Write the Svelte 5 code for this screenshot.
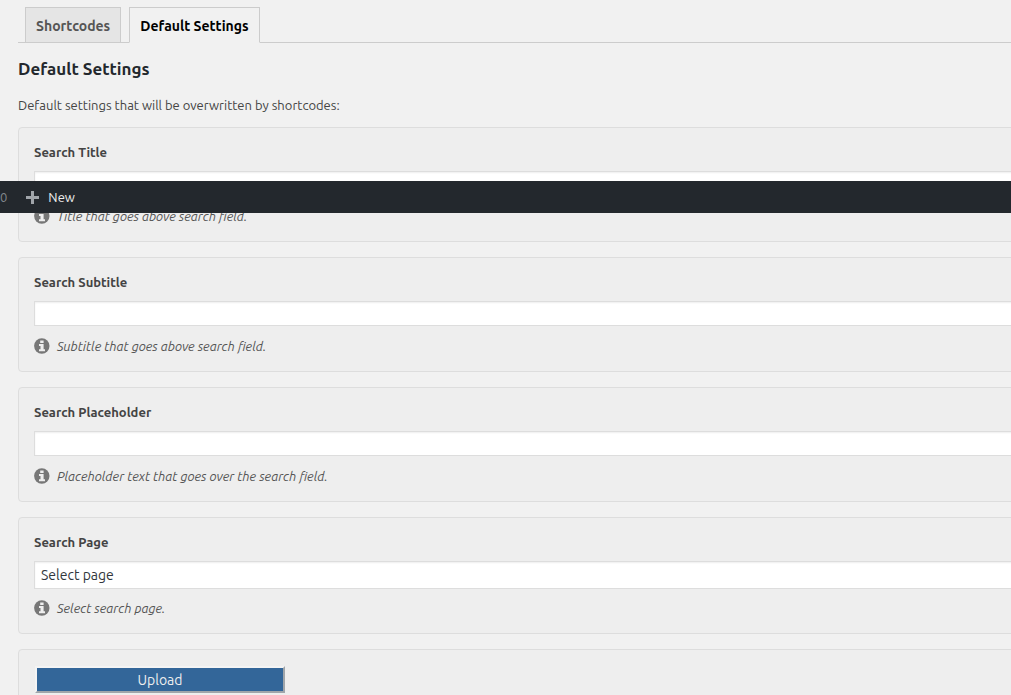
<script>
    let activeTab = "defaults";

    const tabs = [
        { id: "shortcodes", label: "Shortcodes" },
        { id: "defaults", label: "Default Settings" },
    ];

    const fields = [
        { id: "title", label: "Search Title", type: "text", info: "Title that goes above search field." },
        { id: "subtitle", label: "Search Subtitle", type: "text", info: "Subtitle that goes above search field." },
        { id: "placeholder", label: "Search Placeholder", type: "text", info: "Placeholder text that goes over the search field." },
        { id: "page", label: "Search Page", type: "select", info: "Select search page." },
    ];
</script>

<div class="screen">
    <nav class="tabs">
        {#each tabs as tab}
            <a
                href="#{tab.id}"
                class="tab"
                class:active={tab.id == activeTab}
                on:click={() => (activeTab = tab.id)}>{tab.label}</a
            >
        {/each}
    </nav>

    <main>
        <h2>Default Settings</h2>
        <p class="intro">Default settings that will be overwritten by shortcodes:</p>

        {#each fields as field}
            <section class="card">
                <label for={field.id}>{field.label}</label>
                {#if field.type == "select"}
                    <select id={field.id}>
                        <option>Select page</option>
                    </select>
                {:else}
                    <input id={field.id} type="text" />
                {/if}
                <p class="info">
                    <svg viewBox="0 0 16 16" aria-hidden="true">
                        <circle cx="7.8" cy="8" r="7.7" />
                        <path d="M6.2 2.4h3.4v2.6H6.2zM5 6h4.6v5.2H11V13.2H5v-2h1.5V8H5z" />
                    </svg>
                    <em>{field.info}</em>
                </p>
            </section>
        {/each}

        <section class="card">
            <button class="upload" type="button">Upload</button>
        </section>
    </main>

    <div class="adminbar">
        <span class="count">0</span>
        <a href="#new">
            <svg viewBox="0 0 13 13" aria-hidden="true">
                <path d="M5 0h3v5h5v3H8v5H5V8H0V5h5z" />
            </svg>
            New
        </a>
    </div>
</div>

<style>
    :global(body) {
        background: #f1f1f1;
    }
    .screen {
        position: relative;
        height: 100vh;
        overflow: hidden;
        color: #444;
        font-family: Ubuntu, "Open Sans", sans-serif;
        font-size: 13px;
    }
    .tabs {
        display: flex;
        gap: 8px;
        margin-left: 18px;
        padding: 7px 7px 0;
        border-bottom: 1px solid #ccc;
    }
    .tab {
        margin-bottom: -1px;
        padding: 6px 10px 4px;
        border: 1px solid #ccc;
        background: #e5e5e5;
        color: #555;
        font-size: 14px;
        font-weight: 700;
        line-height: 24px;
        text-decoration: none;
    }
    .tab.active {
        background: #f1f1f1;
        border-bottom-color: #f1f1f1;
        color: #000;
    }
    main {
        /* cards run past the right edge of the window */
        margin: 0 -20px 0 18px;
    }
    h2 {
        margin: 0;
        padding: 14px 0 13px;
        color: #23282d;
        font-size: 17px;
        line-height: 24px;
    }
    p {
        margin: 0;
    }
    .intro {
        margin-bottom: 11px;
        line-height: 22px;
    }
    .card {
        display: flex;
        flex-direction: column;
        align-items: flex-start;
        margin-bottom: 15px;
        padding: 15px;
        border: 1px solid #ddd;
        border-radius: 4px;
        background: #eee;
    }
    label {
        margin-bottom: 9px;
        font-weight: 700;
        line-height: 19px;
    }
    input,
    select {
        box-sizing: border-box;
        width: 100%;
        height: 25px;
        margin: 0 0 10px;
        padding: 3px 5px;
        border: 1px solid #ddd;
        border-radius: 0;
        background: #fff;
        box-shadow: inset 0 1px 2px rgba(0, 0, 0, 0.07);
        color: #32373c;
        font-family: inherit;
        font-size: 14px;
    }
    select {
        appearance: none;
        height: 28px;
        margin-bottom: 9px;
        padding: 0 6px;
    }
    .info {
        display: flex;
        align-items: center;
        gap: 7px;
        color: #555;
        line-height: 20px;
    }
    .info svg {
        width: 16px;
        height: 16px;
        fill: #777;
    }
    .info svg path {
        fill: #eee;
    }
    .upload {
        width: 250px;
        height: 27px;
        margin: 1px;
        padding: 0;
        border: 2px solid;
        border-color: #f4f4f4 #a0a5aa #a0a5aa #f4f4f4;
        background: #369;
        color: #eee;
        font-family: inherit;
        font-size: 14px;
        line-height: 20px;
    }
    .adminbar {
        position: absolute;
        top: 181px;
        left: 0;
        right: 0;
        display: flex;
        align-items: center;
        gap: 19px;
        height: 32px;
        background: #23282d;
    }
    .count {
        color: #82878c;
    }
    .adminbar a {
        display: flex;
        align-items: center;
        gap: 9px;
        color: #eee;
        text-decoration: none;
    }
    .adminbar svg {
        width: 13px;
        height: 13px;
        fill: #a0a5aa;
    }
</style>
